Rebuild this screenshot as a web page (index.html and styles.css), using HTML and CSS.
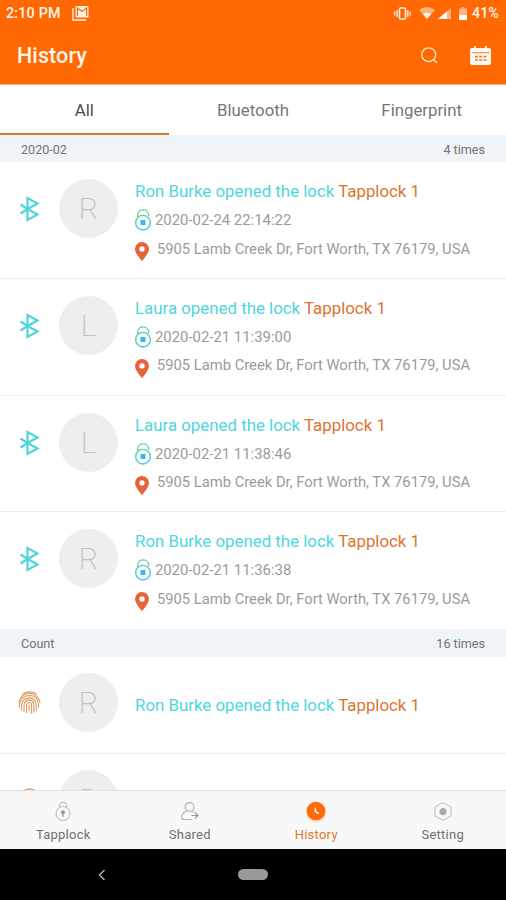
FILE: index.html
```html
<!DOCTYPE html>
<html lang="en">
<head>
<meta charset="utf-8">
<title>History</title>
<link rel="stylesheet" href="styles.css">
</head>
<body>
<svg class="defs" aria-hidden="true">
  <defs>
    <linearGradient id="lock-stroke" x1="0" y1="0" x2="0" y2="1"><stop offset="0" stop-color="#62cfa5"/><stop offset="1" stop-color="#43cbe8"/></linearGradient>
    <symbol id="bluetooth" viewBox="0 0 20 26"><path d="M.5 8.500 L7.500 13 L17.500 18.500 L7.500 24 V2 L17.500 7.500 L7.500 13 L.5 17.500" fill="none" stroke="#4cd5dc" stroke-width="2.200"/></symbol>
    <symbol id="open-lock" viewBox="0 0 17 22"><path d="M2.600 8 V6.500 A5.600 5.600 0 0 1 13.700 5.500 V7" fill="none" stroke="#62cfa5" stroke-width="1.300"/><circle cx="8" cy="13.700" r="7.300" fill="none" stroke="url(#lock-stroke)" stroke-width="1.400"/><rect x="5.500" y="11" width="5" height="5" fill="#39b9e5"/></symbol>
    <symbol id="pin" viewBox="0 0 14 19"><path fill-rule="evenodd" d="M7 0 A7 7 0 0 0 0 7 C0 11.500 7 19 7 19 S14 11.500 14 7 A7 7 0 0 0 7 0 M7 4.200 A2.700 2.700 0 1 1 7 9.600 A2.700 2.700 0 1 1 7 4.200" fill="#e7643a"/></symbol>
    <symbol id="fingerprint" viewBox="0 0 24 24"><g fill="none" stroke="#dc995f" stroke-width="1.150" stroke-linecap="round"><path d="M5 3.200 Q12 -1.500 19 3.200"/><path d="M1 12 Q2 7.500 4.200 5.500 Q12 -1 20 5.800 Q22.500 8.500 23 12"/><path d="M1.500 17 V14 Q3 4.800 12 4.700 Q20.500 4.800 21.300 13 V17"/><path d="M3.800 20 V14 Q5 7.200 12 7.200 Q18.500 7.500 18.900 14 V20.500"/><path d="M6.300 21.500 V15 Q6.500 9.500 12 9.500 Q16.500 9.700 16.600 15 V22"/><path d="M9 22.500 V15 Q9 12 12 12 Q14.200 12 14.200 15 V23.300"/><path d="M11.600 15 V20.500"/></g></symbol>
  </defs>
</svg>
<div class="screen">
  <header class="top">
    <div class="status">
      <span class="time">2:10 PM</span>
      <svg class="mail" viewBox="0 0 17 15"><path d="M1 2 V14 H14" fill="none" stroke="#fff3e8" stroke-width="1.400"/><rect x="3.500" y="0" width="13" height="11.500" rx="1" fill="#fff3e8"/><path d="M5.400 9.800 V2 L10 5.500 L14.600 2 V9.800" fill="none" stroke="#ff6802" stroke-width="1.300"/></svg>
      <span class="spacer"></span>
      <svg class="vibrate" viewBox="0 0 17 13"><rect x="5.500" y="1" width="6" height="11" rx="1" fill="none" stroke="#fff3e8" stroke-width="1.500"/><path d="M3.200 3 V10 M.8 4.500 V8.500 M13.800 3 V10 M16.200 4.500 V8.500" stroke="#fff3e8" stroke-width="1.300"/></svg>
      <svg class="wifi" viewBox="0 0 16 12"><path d="M0 3 Q8 -3 16 3 L8 12Z" fill="#ffb27d"/><path d="M4 7 Q8 4.500 12 7 L8 12Z" fill="#fff"/></svg>
      <svg class="signal" viewBox="0 0 13 11"><path d="M0 11 L13 0 V11Z" fill="#ffb27d"/><path d="M0 11 L9 3.400 V11Z" fill="#fff"/></svg>
      <svg class="battery" viewBox="0 0 8 13"><path d="M2.500 0 H5.500 V1.500 H8 V13 H0 V1.500 H2.500Z" fill="#ffb27d"/><path d="M0 8 H8 V13 H0Z" fill="#fff"/></svg>
      <span class="percent">41%</span>
    </div>
    <div class="title-bar">
      <h1>History</h1>
      <svg class="search" viewBox="0 0 17 17"><circle cx="7.700" cy="7.700" r="6.900" fill="none" stroke="#ffe9d2" stroke-width="1.300"/><path d="M12.700 12.700 L16 16" stroke="#ffe9d2" stroke-width="1.400"/></svg>
      <svg class="calendar" viewBox="0 0 21 19"><path d="M2 2 H4 V0 H6 V2 H15 V0 H17 V2 H19 Q21 2 21 4 V17 Q21 19 19 19 H2 Q0 19 0 17 V4 Q0 2 2 2Z" fill="#fff8f0"/><path d="M1.500 6.700 H19.500" stroke="#e98b45" stroke-width="1.100"/><path d="M5 10.700 H8 M9.200 10.700 H12.200 M13.500 10.700 H16.500 M5 14 H8 M9.200 14 H12.200 M13.500 14 H16.500" stroke="#ef7b2e" stroke-width="1.700"/></svg>
    </div>
  </header>
  <nav class="tabs"><div class="tab active">All</div><div class="tab">Bluetooth</div><div class="tab">Fingerprint</div></nav>
  <main class="list">
    <div class="section"><span>2020-02</span><span>4 times</span></div>
    <article class="entry">
      <svg class="method"><use href="#bluetooth"/></svg><div class="avatar">R</div>
      <div class="info"><h2>Ron Burke opened the lock <b>Tapplock 1</b></h2><p class="date"><svg class="lock"><use href="#open-lock"/></svg>2020-02-24 22:14:22</p><p class="place"><svg class="pin"><use href="#pin"/></svg>5905 Lamb Creek Dr, Fort Worth, TX 76179, USA</p></div>
    </article>
    <article class="entry">
      <svg class="method"><use href="#bluetooth"/></svg><div class="avatar">L</div>
      <div class="info"><h2>Laura opened the lock <b>Tapplock 1</b></h2><p class="date"><svg class="lock"><use href="#open-lock"/></svg>2020-02-21 11:39:00</p><p class="place"><svg class="pin"><use href="#pin"/></svg>5905 Lamb Creek Dr, Fort Worth, TX 76179, USA</p></div>
    </article>
    <article class="entry">
      <svg class="method"><use href="#bluetooth"/></svg><div class="avatar">L</div>
      <div class="info"><h2>Laura opened the lock <b>Tapplock 1</b></h2><p class="date"><svg class="lock"><use href="#open-lock"/></svg>2020-02-21 11:38:46</p><p class="place"><svg class="pin"><use href="#pin"/></svg>5905 Lamb Creek Dr, Fort Worth, TX 76179, USA</p></div>
    </article>
    <article class="entry">
      <svg class="method"><use href="#bluetooth"/></svg><div class="avatar">R</div>
      <div class="info"><h2>Ron Burke opened the lock <b>Tapplock 1</b></h2><p class="date"><svg class="lock"><use href="#open-lock"/></svg>2020-02-21 11:36:38</p><p class="place"><svg class="pin"><use href="#pin"/></svg>5905 Lamb Creek Dr, Fort Worth, TX 76179, USA</p></div>
    </article>
    <div class="section count"><span>Count</span><span>16 times</span></div>
    <article class="entry short">
      <svg class="method finger"><use href="#fingerprint"/></svg><div class="avatar">R</div>
      <div class="info"><h2>Ron Burke opened the lock <b>Tapplock 1</b></h2></div>
    </article>
    <article class="entry short">
      <svg class="method finger"><use href="#fingerprint"/></svg><div class="avatar">R</div>
    </article>
  </main>
  <nav class="bottom">
    <div class="item"><svg viewBox="0 0 20 20"><g fill="none" stroke="#b4b4b4" stroke-width="1"><circle cx="10" cy="12.500" r="7"/><path d="M6.500 6.300 V4.500 A3.500 3.500 0 0 1 13.500 4.500 V6.300"/></g><circle cx="10" cy="11.300" r="2.100" fill="#999"/><path d="M10 12 V16" stroke="#999" stroke-width="1.200"/></svg>Tapplock</div>
    <div class="item"><svg viewBox="0 0 20 20"><g fill="none" stroke="#b4b4b4" stroke-width="1.200"><circle cx="9.500" cy="6" r="4.400"/><path d="M6.500 10 Q2 12 1.800 16.500 Q1.800 18.500 4 18.500 H12.500 M12.500 10 L14 11"/><path d="M11.500 14.500 H18 M15 11.500 L18 14.500 L15 17.300" stroke="#999"/></g></svg>Shared</div>
    <div class="item selected"><svg viewBox="0 0 20 20"><circle cx="10" cy="10" r="9.300" fill="#ff6b0a"/><path d="M9.300 6.500 V10.300 L12.700 12.500" fill="none" stroke="#fff5e9" stroke-width="1.500"/></svg>History</div>
    <div class="item"><svg viewBox="0 0 20 20"><path d="M10 1.700 L18 6 V15 L10 19.300 L2 15 V6Z" fill="none" stroke="#bbb" stroke-width="1" stroke-linejoin="round"/><circle cx="10" cy="10.600" r="3.600" fill="#aaa"/></svg>Setting</div>
  </nav>
  <footer class="system"><svg class="back" viewBox="0 0 8 12"><path d="M6.500 1 L1.500 6 L6.500 11" fill="none" stroke="#b0b0b0" stroke-width="1.500"/></svg><span class="home"></span></footer>
</div>
</body>
</html>
```

FILE: styles.css
```css
* { box-sizing: border-box; }
body { margin: 0; font-family: Roboto, "Liberation Sans", sans-serif; background: #fff; }
h1, h2, p { margin: 0; font-weight: 400; }
svg { display: block; flex: none; }
.defs { position: absolute; width: 0; height: 0; }
.screen { width: 506px; height: 900px; display: flex; flex-direction: column; overflow: hidden; }
.top { height: 85px; flex: none; background: #ff6802; border-bottom: 1px solid #ffab78; color: #fff7ed; }
.status { height: 26px; display: flex; align-items: center; padding: 0 7px 0 6px; font-size: 14.3px; font-weight: 500; }
.time { letter-spacing: .2px; }
.mail { width: 17px; height: 15px; margin-left: 11px; }
.spacer { flex: 1; }
.vibrate { width: 17px; height: 13px; margin-right: 8px; }
.wifi { width: 16px; height: 12px; margin-right: 3px; }
.signal { width: 13px; height: 11px; margin-right: 8px; }
.battery { width: 8px; height: 13px; margin-right: 5px; }
.percent { width: 27px; white-space: nowrap; }
.title-bar { height: 58px; display: flex; align-items: center; padding: 0 15px 0 17px; }
h1 { flex: 1; font-size: 21.5px; font-weight: 500; letter-spacing: .1px; line-height: 26px; margin-top: 2px; }
.search { width: 17px; height: 17px; margin-right: 32px; }
.calendar { width: 21px; height: 19px; }
.tabs { height: 50px; flex: none; display: grid; grid-template-columns: repeat(3, 1fr); }
.tab { text-align: center; font-size: 16.8px; line-height: 50px; height: 50px; color: #777; }
.tab.active { color: #4c4c4c; border-bottom: 2px solid #d17a35; }
.list { flex: 1; min-height: 0; overflow: hidden; }
.section { height: 27px; background: #eef4f7; display: flex; justify-content: space-between; align-items: center; padding: 2px 21px 0; font-size: 12.6px; color: #707577; }
.count { height: 28px; padding-top: 1px; }
.entry { height: 116.75px; display: flex; padding: 17px 0 0 20px; border-bottom: 1px solid #ededed; }
.entry:has(+ .section) { border: 0; }
.method { width: 20px; height: 26px; margin: 17px 19px 0 0; }
.avatar { width: 59px; height: 59px; margin-right: 1px; flex: none; border-radius: 50%; background: #eee; color: #c0c0c0; font-size: 30px; font-weight: 200; line-height: 60px; text-align: center; }
.info { margin: -1px 0 0 16px; white-space: nowrap; }
h2 { font-size: 16.85px; line-height: 26px; color: #50d6de; }
h2 b { font-weight: 400; color: #dc7430; }
.date, .place { display: flex; align-items: center; color: #9b9b9b; }
.date { height: 28px; margin-top: 2px; font-size: 14.9px; }
.lock { width: 17px; height: 22px; margin-right: 3px; }
.place { height: 29px; font-size: 14.75px; }
.pin { width: 14px; height: 19px; margin: 6px 8px 0 0; }
.short { height: 97px; padding: 16px 0 0 18px; }
.finger { width: 23px; height: 25px; margin: 17px 18px 0 0; }
.short h2 { margin-top: 20px; }
.bottom { height: 59px; flex: none; background: #f8f8f8; border-top: 1px solid #dedede; display: grid; grid-template-columns: repeat(4, 1fr); }
.item { display: flex; flex-direction: column; align-items: center; padding-top: 10px; font-size: 13px; line-height: 16px; letter-spacing: .25px; color: #707070; }
.item svg { width: 20px; height: 20px; margin-bottom: 6px; }
.selected { color: #de7a2b; }
.selected svg { filter: drop-shadow(0 1px 1px #ffc09a); }
.system { height: 51px; flex: none; background: #000; display: grid; grid-template-columns: 1fr 30px 1fr; align-items: center; }
.back { width: 8px; height: 12px; margin-left: 98px; }
.home { width: 30px; height: 11px; border-radius: 6px; background: #999; }
```
